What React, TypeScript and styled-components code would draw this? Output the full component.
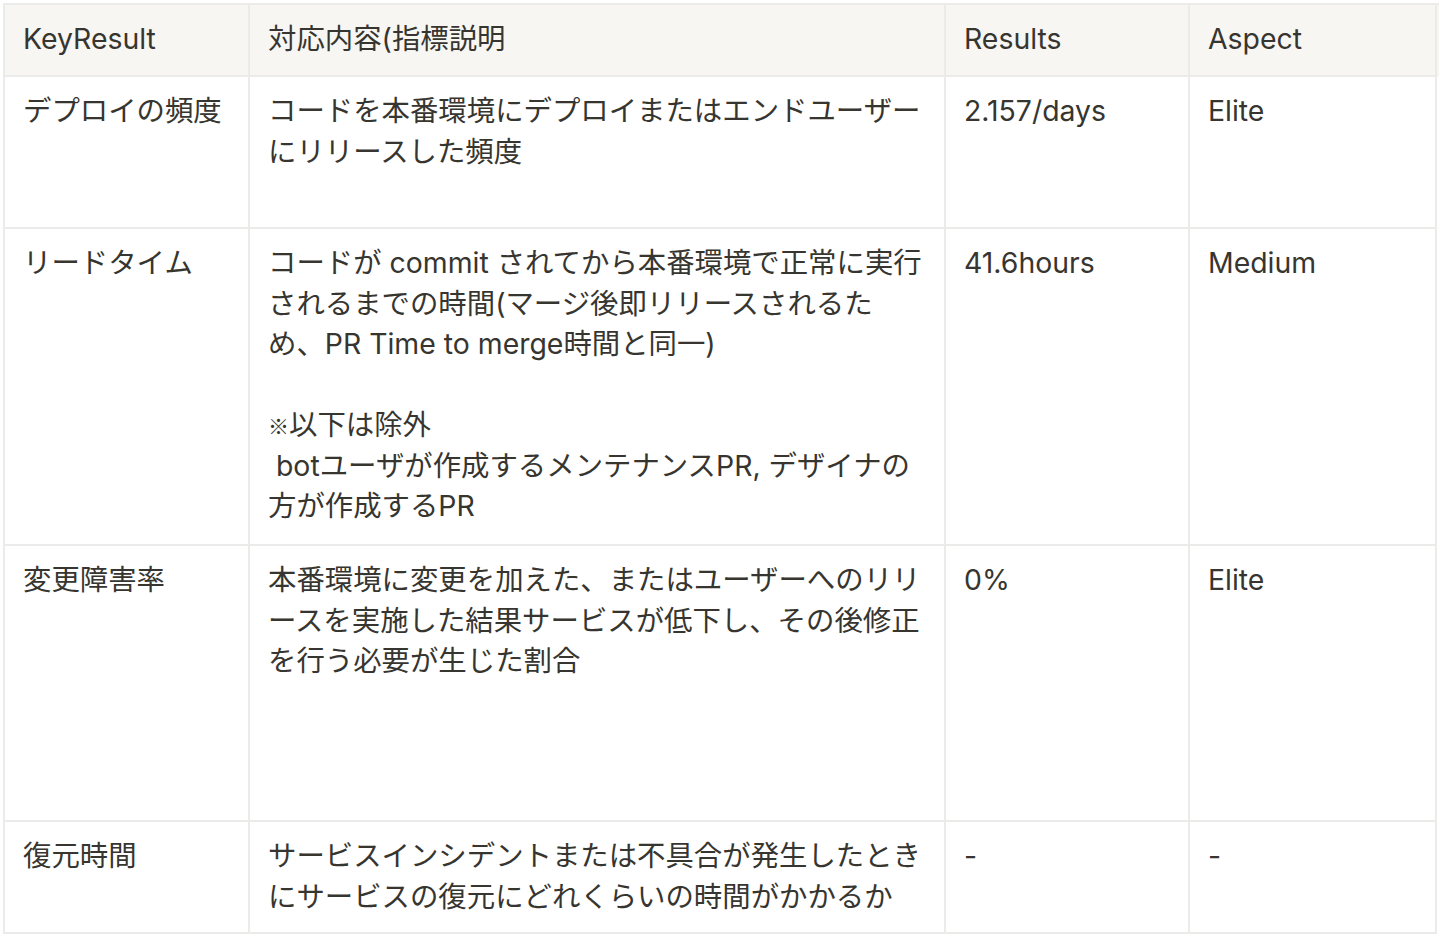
import React from 'react'
import styled, { createGlobalStyle } from 'styled-components';

const GlobalStyle = createGlobalStyle`
  body {
    margin: 0;
    background: #ffffff;
  }
`

const Page = styled.div`
  padding: 3px 0 0 3px;
  font-family: "Inter", "Noto Sans CJK JP", sans-serif;
  color: #37352f;
`
const Table = styled.div`
  width: 1434px;
  border-top: 2px solid #ebebe9;
  border-left: 2px solid #ebebe9;
`
const Row = styled.div<{ $height: number; $head?: boolean }>`
  display: grid;
  grid-template-columns: 245px 696px 244px 247px;
  min-height: ${(p) => p.$height}px;
  background: ${(p) => (p.$head ? '#f7f6f3' : '#ffffff')};
`
const Cell = styled.div`
  box-sizing: border-box;
  padding: 14px 18px;
  border-right: 2px solid #ebebe9;
  border-bottom: 2px solid #ebebe9;
  font-size: 28.4px;
  line-height: 40.5px;
  white-space: pre;
  overflow: hidden;
`
const Mark = styled.span`
  font-family: "Noto Sans CJK JP", sans-serif;
  font-size: 21px;
  vertical-align: 1px;
`

const rows: { key: string; desc: React.ReactNode; result: string; aspect: string; height: number }[] = [
  {
    key: 'デプロイの頻度',
    desc: 'コードを本番環境にデプロイまたはエンドユーザー\nにリリースした頻度',
    result: '2.157/days',
    aspect: 'Elite',
    height: 152,
  },
  {
    key: 'リードタイム',
    desc: (
      <>
        {'コードが commit されてから本番環境で正常に実行\nされるまでの時間(マージ後即リリースされるた\nめ、PR Time to merge時間と同一)\n\n'}
        <Mark>※</Mark>
        {'以下は除外\n botユーザが作成するメンテナンスPR, デザイナの\n方が作成するPR'}
      </>
    ),
    result: '41.6hours',
    aspect: 'Medium',
    height: 317,
  },
  {
    key: '変更障害率',
    desc: '本番環境に変更を加えた、またはユーザーへのリリ\nースを実施した結果サービスが低下し、その後修正\nを行う必要が生じた割合',
    result: '0%',
    aspect: 'Elite',
    height: 276,
  },
  {
    key: '復元時間',
    desc: 'サービスインシデントまたは不具合が発生したとき\nにサービスの復元にどれくらいの時間がかかるか',
    result: '-',
    aspect: '-',
    height: 112,
  },
]

const App = () => {
  return (
    <Page>
      <GlobalStyle />
      <Table>
        <Row $height={72} $head>
          <Cell>KeyResult</Cell>
          <Cell>対応内容(指標説明</Cell>
          <Cell>Results</Cell>
          <Cell>Aspect</Cell>
        </Row>
        {rows.map((r) => (
          <Row key={r.key} $height={r.height}>
            <Cell>{r.key}</Cell>
            <Cell>{r.desc}</Cell>
            <Cell>{r.result}</Cell>
            <Cell>{r.aspect}</Cell>
          </Row>
        ))}
      </Table>
    </Page>
  )
}

export default App;
